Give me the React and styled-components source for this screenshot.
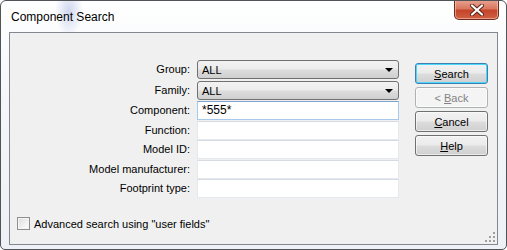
import React from 'react';
import styled, { createGlobalStyle } from 'styled-components';

const GlobalStyle = createGlobalStyle`
  html, body {
    margin: 0;
    padding: 0;
    background: #ffffff;
  }
  body {
    font-family: "Liberation Sans", Arial, sans-serif;
    font-size: 11px;
    color: #000;
  }
`;

const Window = styled.div`
  box-sizing: border-box;
  width: 507px;
  height: 250px;
  border: 1px solid #505458;
  border-radius: 6px 6px 5px 5px;
  background:
    radial-gradient(ellipse 14px 26px at 68px 10px, rgba(120, 140, 210, 0.35), transparent),
    linear-gradient(180deg, #ffffff 0%, #f4f6f9 40%, #eef1f5 100%);
  display: flex;
  flex-direction: column;
  padding: 0 8px 4px 8px;
  overflow: hidden;
`;

const TitleBar = styled.div`
  height: 30px;
  display: flex;
  align-items: flex-start;
  justify-content: space-between;
  flex-shrink: 0;
`;

const Title = styled.div`
  font-size: 12px;
  padding: 9px 0 0 2px;
  color: #000;
`;

const CloseButton = styled.div`
  box-sizing: border-box;
  width: 45px;
  height: 20px;
  margin-top: -1px;
  margin-right: -1px;
  border: 1px solid #6d2a1e;
  border-top: none;
  border-radius: 0 0 5px 5px;
  background: linear-gradient(180deg, #e8a493 0%, #d9785f 45%, #c4442a 55%, #d06043 100%);
  box-shadow: inset 0 0 0 1px rgba(255, 210, 195, 0.55);
  display: flex;
  align-items: center;
  justify-content: center;
`;

const Client = styled.div`
  flex: 1;
  box-sizing: border-box;
  margin-top: 1px;
  border: 1px solid #828790;
  background: #f0f0f0;
  display: flex;
  flex-direction: column;
  padding: 27px 0 0 0;
  position: relative;
`;

const Body = styled.div`
  display: flex;
  align-items: flex-start;
`;

const Form = styled.div`
  display: flex;
  flex-direction: column;
`;

const Row = styled.div`
  display: grid;
  grid-template-columns: 180px 202px;
  column-gap: 7px;
  height: ${p => p.h}px;
  align-items: start;
`;

const Label = styled.div`
  text-align: right;
  line-height: ${p => p.h}px;
  white-space: nowrap;
`;

const Combo = styled.div`
  box-sizing: border-box;
  height: 19px;
  border: 1px solid #707070;
  border-radius: 3px;
  background: linear-gradient(180deg, #f2f2f2 0%, #ebebeb 48%, #dddddd 52%, #cfcfcf 100%);
  display: flex;
  align-items: center;
  justify-content: space-between;
  padding: 0 5px 0 4px;
  font-size: 11px;
`;

const Arrow = styled.span`
  width: 0;
  height: 0;
  border-left: 4px solid transparent;
  border-right: 4px solid transparent;
  border-top: 4px solid #000;
  margin-top: 1px;
`;

const TextBox = styled.div`
  box-sizing: border-box;
  height: ${p => p.h}px;
  background: #fff;
  border: 1px solid ${p => (p.focus ? '#a9c9ec' : '#e3e9ef')};
  border-top-color: ${p => (p.focus ? '#7da2ce' : '#d7dce2')};
  padding: 0 4px;
  line-height: ${p => p.h - 2}px;
  font-size: 12px;
`;

const Buttons = styled.div`
  display: flex;
  flex-direction: column;
  gap: 3px;
  margin-left: 16px;
  margin-top: 3px;
`;

const Button = styled.div`
  box-sizing: border-box;
  width: 73px;
  height: 21px;
  border-radius: 3px;
  border: 1px solid ${p => (p.primary ? '#3c7fb1' : p.disabled ? '#adb2b5' : '#707070')};
  background: ${p =>
    p.disabled
      ? '#f4f4f4'
      : 'linear-gradient(180deg, #f2f2f2 0%, #ebebeb 48%, #dddddd 52%, #cfcfcf 100%)'};
  box-shadow: ${p => (p.primary ? 'inset 0 0 0 1px #48d8fb' : 'inset 0 0 0 1px rgba(255,255,255,0.6)')};
  color: ${p => (p.disabled ? '#838383' : '#000')};
  display: flex;
  align-items: center;
  justify-content: center;
  font-size: 11px;

  u {
    text-decoration: underline;
    text-underline-offset: 1px;
  }
`;

const Footer = styled.div`
  margin-top: auto;
  padding: 0 0 14px 7px;
  display: flex;
  align-items: center;
  gap: 4px;
`;

const CheckBox = styled.span`
  box-sizing: border-box;
  width: 13px;
  height: 13px;
  border: 1px solid #8e8f8f;
  background: linear-gradient(135deg, #dcdcdc 0%, #f2f2f2 60%, #ffffff 100%);
  box-shadow: inset 0 0 0 1px #f4f4f4;
`;

const Grip = styled.svg`
  position: absolute;
  right: 1px;
  bottom: 1px;
`;

const rows = [
  { label: 'Group:', h: 21, kind: 'combo', value: 'ALL' },
  { label: 'Family:', h: 20, kind: 'combo', value: 'ALL' },
  { label: 'Component:', h: 19.5, kind: 'text', value: '*555*', focus: true },
  { label: 'Function:', h: 19.5, kind: 'text' },
  { label: 'Model ID:', h: 19.5, kind: 'text' },
  { label: 'Model manufacturer:', h: 19.5, kind: 'text' },
  { label: 'Footprint type:', h: 19.5, kind: 'text' },
];

export default function App() {
  return (
    <>
      <GlobalStyle />
      <Window>
        <TitleBar>
          <Title>Component Search</Title>
          <CloseButton>
            <svg width="14" height="12" viewBox="0 0 14 12">
              <path d="M2 1.5 L12 10.5 M12 1.5 L2 10.5" stroke="#5a2318" strokeWidth="4" strokeLinecap="round" />
              <path d="M2 1.5 L12 10.5 M12 1.5 L2 10.5" stroke="#ffffff" strokeWidth="2.2" strokeLinecap="round" />
            </svg>
          </CloseButton>
        </TitleBar>
        <Client>
          <Body>
            <Form>
              {rows.map(r => (
                <Row key={r.label} h={r.h}>
                  <Label h={r.kind === 'combo' ? 19 : 19.5}>{r.label}</Label>
                  {r.kind === 'combo' ? (
                    <Combo>
                      {r.value}
                      <Arrow />
                    </Combo>
                  ) : (
                    <TextBox h={19} focus={r.focus}>{r.value}</TextBox>
                  )}
                </Row>
              ))}
            </Form>
            <Buttons>
              <Button primary><span><u>S</u>earch</span></Button>
              <Button disabled><span>&lt; <u>B</u>ack</span></Button>
              <Button><span><u>C</u>ancel</span></Button>
              <Button><span><u>H</u>elp</span></Button>
            </Buttons>
          </Body>
          <Footer>
            <CheckBox />
            <span>Advanced search using "user fields"</span>
          </Footer>
          <Grip width="12" height="12" viewBox="0 0 12 12">
            {[[9, 1], [9, 5], [5, 5], [9, 9], [5, 9], [1, 9]].map(([x, y]) => (
              <rect key={`${x}-${y}`} x={x} y={y} width="2" height="2" fill="#a0a0a0" />
            ))}
          </Grip>
        </Client>
      </Window>
    </>
  );
}
